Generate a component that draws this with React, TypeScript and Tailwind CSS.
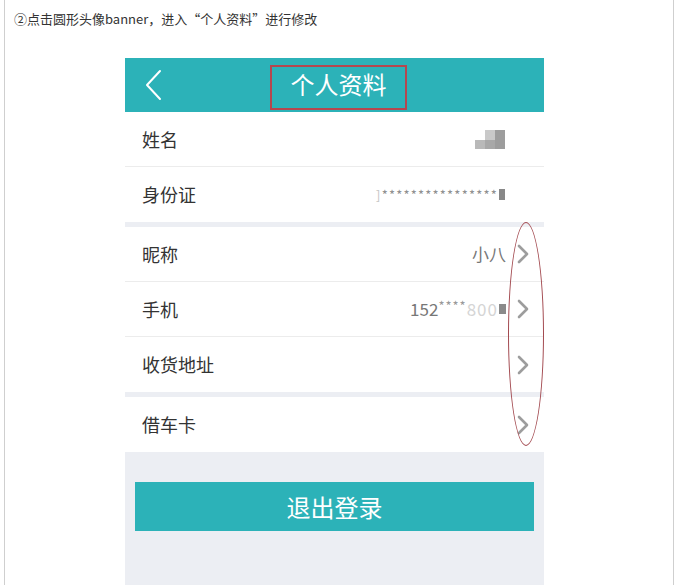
const font = { fontFamily: '"Noto Sans CJK SC", "Liberation Sans", sans-serif' };

function Chevron() {
  return (
    <svg width="14" height="22" viewBox="0 0 14 22" className="ml-[10px]">
      <polyline points="3,3 11,11 3,19" fill="none" stroke="#9d9d9d" strokeWidth="2.6" strokeLinecap="round" strokeLinejoin="round" />
    </svg>
  );
}

function Row({ label, value, arrow, border }: { label: string; value?: React.ReactNode; arrow?: boolean; border?: boolean }) {
  return (
    <div className={`flex items-center h-[55px] bg-white pl-[17px] pr-[14px] ${border ? 'border-b border-[#ececec]' : ''}`}>
      <span className="text-[18px] text-[#333]">{label}</span>
      <div className="ml-auto flex items-center">
        {value}
        {arrow ? <Chevron /> : <span className="w-[25px]" />}
      </div>
    </div>
  );
}

export default function App() {
  return (
    <div className="w-[679px] h-[585px] bg-white overflow-hidden" style={font}>
      <div className="ml-[4px] mr-[5px] h-full border-l border-r border-[#cfcfcf] relative">
        <p className="pl-[9px] pt-[10px] text-[13px] leading-[18px] text-[#333]">
          ②点击圆形头像banner，进入“个人资料”进行修改
        </p>

        {/* phone screenshot */}
        <div className="ml-[120px] mt-[30px] w-[419px] h-[530px] bg-[#eceef3] relative">
          <div className="h-[54px] bg-[#2cb2b8] flex items-center relative">
            <svg width="20" height="32" viewBox="0 0 20 32" className="ml-[19px]">
              <polyline points="16,2 3,16 16,30" fill="none" stroke="#fff" strokeWidth="2" strokeLinecap="round" strokeLinejoin="round" />
            </svg>
            <div className="absolute left-[145px] top-[7px] w-[137px] h-[45px] border-2 border-[#b5474e] flex items-center justify-center pb-[8px]">
              <span className="text-[24px] leading-[30px] text-white">个人资料</span>
            </div>
          </div>

          <Row
            label="姓名"
            border
            value={
              <div className="flex items-end">
                <span className="w-[10px] h-[9px] bg-[#b9b9b9]" />
                <span className="flex flex-col">
                  <span className="w-[10px] h-[10px] bg-[#c9c9c9]" />
                  <span className="w-[10px] h-[9px] bg-[#a8a8a8]" />
                </span>
                <span className="w-[10px] h-[19px] bg-[#9d9d9d]" />
              </div>
            }
          />
          <Row
            label="身份证"
            value={
              <span className="flex items-center text-[13px] text-[#8f8f8f] tracking-[1.2px]">
                <span className="text-[#c5c5c5]">]</span>****************<span className="w-[6px] h-[11px] bg-[#888] ml-[1px]" />
              </span>
            }
          />
          <div className="h-[5px]" />
          <Row label="昵称" border arrow value={<span className="text-[17px] text-[#777]">小八</span>} />
          <Row
            label="手机"
            border
            arrow
            value={
              <span className="flex items-center text-[17px] text-[#777]">
                152<span className="text-[13px] text-[#999] -mt-[6px] tracking-[1px]">****</span>
                <span className="text-[#d5d5d5] tracking-[1px]">800</span>
                <span className="w-[7px] h-[10px] bg-[#8a8a8a] ml-[1px]" />
              </span>
            }
          />
          <Row label="收货地址" arrow />
          <div className="h-[5px]" />
          <Row label="借车卡" arrow />

          <div className="mt-[30px] mx-[10px] h-[49px] bg-[#2cb2b8] flex items-center justify-center">
            <span className="text-[24px] text-white">退出登录</span>
          </div>

          {/* annotation ellipse */}
          <div className="absolute left-[383px] top-[164px] w-[36px] h-[224px] rounded-[50%] border border-[#a34a50]" />
        </div>
      </div>
    </div>
  );
}
